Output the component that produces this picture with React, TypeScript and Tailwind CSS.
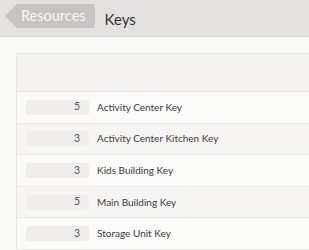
import React from "react";

const rows = [
  { n: 5, name: "Activity Center Key" },
  { n: 3, name: "Activity Center Kitchen Key" },
  { n: 3, name: "Kids Building Key" },
  { n: 5, name: "Main Building Key" },
  { n: 3, name: "Storage Unit Key" },
];

export default function App() {
  return (
    <div
      className="w-[309px] h-[250px] overflow-hidden bg-[#f9f9f8] flex flex-col"
      style={{ fontFamily: "Lato, 'Open Sans', sans-serif" }}
    >
      <div className="h-[37px] shrink-0 bg-[#e2e1df] border-b border-[#d9d8d6] flex items-center pl-[5px]">
        <div className="flex items-center h-[24px] mt-[-4px]">
          <div className="w-0 h-0 border-y-[12px] border-y-transparent border-r-[12px] border-r-[#c5c4c0]" />
          <div className="h-[24px] bg-[#c5c4c0] rounded-r-[3px] flex items-center pl-[4px] pr-[9px] text-[14.5px] text-[#f7f7f6]">
            Resources
          </div>
        </div>
        <div className="ml-[10px] text-[15px] text-[#333] mt-[2px]">Keys</div>
      </div>
      <div className="pt-[16px] pl-[16px]">
        <div className="w-[320px] border border-[#e6e5e3] bg-[#fbfbfa]">
          <div className="h-[38px] bg-[#f3f2f0] border-b border-[#e6e5e3]" />
          {rows.map((r, i) => (
            <div
              key={i}
              className={`h-[31.6px] border-b border-[#ebeae8] flex items-center pl-[9px] ${
                i % 2 === 1 ? "bg-[#f6f5f3]" : "bg-[#fbfbfa]"
              }`}
            >
              <div className="w-[63px] h-[15px] bg-[#efeeec] rounded-[2px] flex items-center justify-end pr-[9px] text-[10.5px] text-[#555]">
                {r.n}
              </div>
              <div className="ml-[8px] text-[10px] text-[#3a3a3a]">{r.name}</div>
            </div>
          ))}
        </div>
      </div>
    </div>
  );
}
